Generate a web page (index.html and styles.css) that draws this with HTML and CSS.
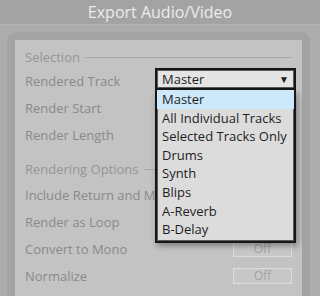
FILE: index.html
```html
<!DOCTYPE html>
<html lang="en">

<head>
    <meta charset="UTF-8">
    <meta name="viewport" content="width=device-width, initial-scale=1.0">
    <title>Export Audio/Video</title>
    <link rel="stylesheet" href="styles.css">
</head>

<body>
    <div class="titlebar">Export Audio/Video</div>

    <div class="frame">
        <div class="panel">
            <div class="section-head first">
                <span>Selection</span>
                <div class="rule"></div>
            </div>

            <div class="row">
                <span class="label">Rendered Track</span>
                <div class="dropdown">
                    <div class="select-box">
                        <span>Master</span>
                        <span class="arrow">&#9660;</span>
                    </div>
                    <ul class="menu">
                        <li class="active">Master</li>
                        <li>All Individual Tracks</li>
                        <li>Selected Tracks Only</li>
                        <li>Drums</li>
                        <li>Synth</li>
                        <li>Blips</li>
                        <li>A-Reverb</li>
                        <li>B-Delay</li>
                    </ul>
                </div>
            </div>
            <div class="row">
                <span class="label">Render Start</span>
            </div>
            <div class="row">
                <span class="label">Render Length</span>
            </div>

            <div class="section-head second">
                <span>Rendering Options</span>
                <div class="rule"></div>
            </div>

            <div class="row">
                <!-- the open menu hides the rest of this label -->
                <span class="label clipped">Include Return and Master Effects</span>
            </div>
            <div class="row">
                <span class="label">Render as Loop</span>
            </div>
            <div class="row">
                <span class="label">Convert to Mono</span>
                <div class="toggle">Off</div>
            </div>
            <div class="row">
                <span class="label">Normalize</span>
                <div class="toggle">Off</div>
            </div>
        </div>
    </div>
</body>

</html>
```

FILE: styles.css
```css
body {
    font-family: "Open Sans", Arial, sans-serif;
    margin: 0;
    padding: 0;
    width: 320px;
    height: 296px;
    overflow: hidden;
    background-color: #adadad;
}

.titlebar {
    height: 24px;
    line-height: 24px;
    text-align: center;
    font-size: 16px;
    color: #ececec;
    background-color: #a3a3a3;
    border-bottom: 1px solid #b3b3b3;
}

.frame {
    margin: 7px 10px 0 7px;
    border: 8px solid #a3a3a3;
    border-bottom: none;
    border-radius: 9px 9px 0 0;
    height: 264px;
}

.panel {
    background-color: #c3c3c3;
    height: 100%;
    padding: 8px 10px 0 10px;
    box-sizing: border-box;
}

.section-head {
    display: flex;
    align-items: center;
    gap: 5px;
    height: 18px;
    font-size: 13px;
    color: #959595;
}

.section-head.first {
    margin-bottom: 1px;
}

.section-head.second {
    margin-top: 12px;
    margin-bottom: 3px;
}

.rule {
    flex: 1;
    height: 1px;
    background-color: #a9a9a9;
}

.row {
    position: relative;
    display: flex;
    align-items: center;
    justify-content: space-between;
    height: 27px;
}

.label {
    font-size: 13px;
    color: #8a8a8a;
    white-space: nowrap;
}

.label.clipped {
    max-width: 130px;
    overflow: hidden;
}

.toggle {
    width: 57px;
    height: 14px;
    line-height: 14px;
    text-align: center;
    font-size: 12px;
    color: #a2a2a2;
    background-color: #c8c8c8;
    border: 1px solid #dcdcdc;
}

.dropdown {
    position: absolute;
    top: 1px;
    left: 130px;
    width: 141px;
    z-index: 2;
}

.select-box {
    display: flex;
    justify-content: space-between;
    align-items: center;
    height: 18px;
    padding: 0 5px 0 5px;
    font-size: 13px;
    color: #1e1e1e;
    background-color: #e4e4e4;
    border: 2px solid #161616;
    box-shadow: inset 0 0 0 1px #5a5a5a;
}

.arrow {
    font-size: 10px;
}

.menu {
    list-style: none;
    margin: 0;
    padding: 0 0 2px 0;
    background-color: #dcdcdc;
    border: 2px solid #161616;
    border-top: none;
    box-shadow: inset 1px 0 0 #5a5a5a, inset -1px 0 0 #5a5a5a, inset 0 -1px 0 #5a5a5a, 2px 3px 6px rgba(0, 0, 0, 0.35);
}

.menu li {
    height: 18.6px;
    line-height: 18.6px;
    padding-left: 5px;
    font-size: 13px;
    color: #1e1e1e;
}

.menu li.active {
    background-color: #cde8fb;
}
```
